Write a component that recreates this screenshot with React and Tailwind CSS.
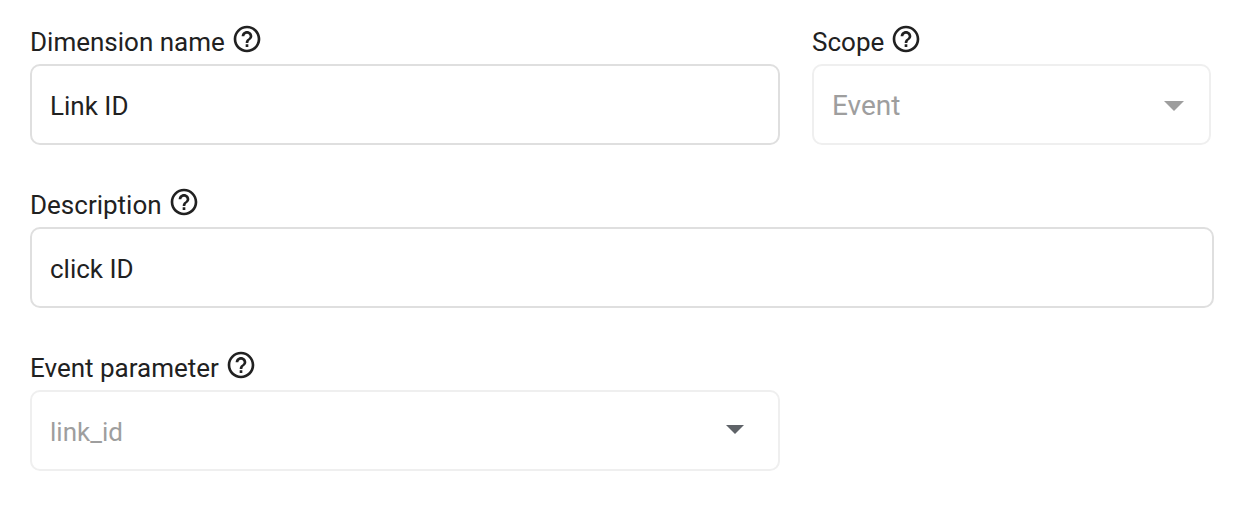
import React, { useState } from 'react';
import { MdHelpOutline } from 'react-icons/md';

function FieldLabel({ htmlFor, children }) {
  return (
    <div className="flex h-[41px] items-start gap-1.5">
      <label htmlFor={htmlFor} className="pt-[3px] text-[26px] leading-8 text-[#212121]">
        {children}
      </label>
      <button type="button" aria-label={`About ${children}`} className="text-[#212121]">
        <MdHelpOutline className="size-8" />
      </button>
    </div>
  );
}

function DisabledSelect({ id, value, className, arrowClassName }) {
  return (
    <div className="relative">
      <select
        id={id}
        disabled
        value={value}
        onChange={() => {}}
        className={`block h-[81px] w-full appearance-none rounded-[10px] border-2 border-[#efefef] bg-white px-[18px] pt-[3px] text-[#9e9e9e] opacity-100 ${className}`}
      >
        <option value={value}>{value}</option>
      </select>
      <svg viewBox="0 0 20 10" className={`pointer-events-none absolute ${arrowClassName}`}>
        <path d="M0 0h20L10 10z" fill="currentColor" />
      </svg>
    </div>
  );
}

function App() {
  const [name, setName] = useState('Link ID');
  const [description, setDescription] = useState('click ID');

  const inputClass =
    'block h-[81px] w-full rounded-[10px] border-2 border-[#dfdfdf] bg-white px-[18px] pt-[3px] text-[26px] text-[#212121] outline-none';

  return (
    <form className="min-h-screen bg-white pt-[23px] pr-8 pl-[30px] font-[Roboto,sans-serif]">
      <div className="flex gap-8">
        <div className="w-[750px] shrink">
          <FieldLabel htmlFor="name">Dimension name</FieldLabel>
          <input id="name" type="text" value={name} onChange={(e) => setName(e.target.value)} className={inputClass} />
        </div>
        <div className="w-[399px] shrink">
          <FieldLabel htmlFor="scope">Scope</FieldLabel>
          <DisabledSelect
            id="scope"
            value="Event"
            className="text-[28px]"
            arrowClassName="top-[37px] right-[27px] h-[10px] w-5 text-[#9e9e9e]"
          />
        </div>
      </div>

      <div className="mt-[41px]">
        <FieldLabel htmlFor="description">Description</FieldLabel>
        <input
          id="description"
          type="text"
          value={description}
          onChange={(e) => setDescription(e.target.value)}
          className={inputClass}
        />
      </div>

      <div className="mt-[41px] max-w-[750px]">
        <FieldLabel htmlFor="parameter">Event parameter</FieldLabel>
        <DisabledSelect
          id="parameter"
          value="link_id"
          className="text-[26px]"
          arrowClassName="top-[35px] right-9 h-[9px] w-[18px] text-[#5f6368]"
        />
      </div>
    </form>
  );
}

export default App;
